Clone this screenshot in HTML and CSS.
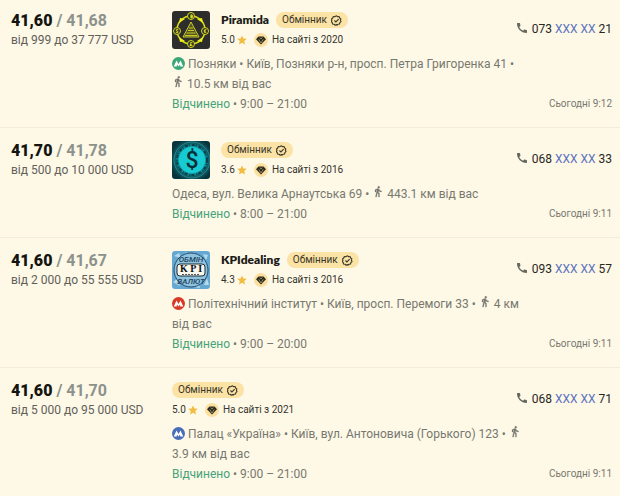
FILE: index.html
```
<!DOCTYPE html>
<html lang="uk">
  <head>
    <meta charset="UTF-8" />
    <meta name="viewport" content="width=device-width, initial-scale=1.0" />
    <title>Обмінники валют</title>
    <link rel="stylesheet" href="styles.css">
  </head>
  <body>
    <!-- Shared icons -->
    <svg class="sprite" aria-hidden="true">
      <symbol id="verified" viewBox="0 0 24 24">
        <path d="M12 1.8l2.6 1.9 3.2-.2 1 3.1 2.7 1.8-1 3.1 1.4 3-2.6 2-.7 3.2-3.2.4-2.4 2.2L12 21l-3 1.3-2.4-2.2-3.2-.4-.7-3.2-2-2.5 1.4-2.5-1-3.1 2.7-1.8 1-3.1 3.2.2z" fill="none" stroke="currentColor" stroke-width="2.4" stroke-linejoin="round" />
        <path d="M7.5 12l3.2 3.2 6-6.2" fill="none" stroke="currentColor" stroke-width="2.4" />
      </symbol>
      <symbol id="star" viewBox="0 0 24 24">
        <path d="M12 1l3.4 7.3 7.9.9-5.900 5.400 1.600 7.900L12 18.500 5 22.500l1.600-7.900L.7 9.200l7.900-.9z" fill="#f1bd41" />
      </symbol>
      <symbol id="diamond" viewBox="0 0 28 28">
        <circle cx="14" cy="14" r="14" fill="#fbdf9e" />
        <path d="M9 7h10l5 5.500L14 23 4 12.500z" fill="#2b2a1e" />
        <path d="M9.500 12.500L14 20l4.500-7.500M11.500 9l2.500 3 2.500-3" fill="none" stroke="#fbdf9e" stroke-width="1" />
      </symbol>
      <symbol id="metro" viewBox="0 0 26 26">
        <circle cx="13" cy="13" r="13" fill="currentColor" />
        <path d="M3.500 19L9 7l4 7 4-7 5.500 12h-6l-.5-4-3 4-3-4-.5 4z" fill="#fff" />
      </symbol>
      <symbol id="walk" viewBox="0 0 24 24">
        <path d="M13.500 5.500c1.100 0 2-.9 2-2s-.9-2-2-2-2 .9-2 2 .9 2 2 2zM9.800 8.900L7 23h2.100l1.800-8 2.100 2v6h2v-7.500l-2.100-2 .6-3C14.800 12 16.800 13 19 13v-2c-1.900 0-3.500-1-4.300-2.400l-1-1.600c-.4-.6-1-1-1.700-1-.3 0-.5.1-.8.1L6 8.300V13h2V9.600l1.800-.7" fill="currentColor" stroke="currentColor" stroke-width="0.6" />
      </symbol>
      <symbol id="phone" viewBox="3 3 18 18">
        <path d="M20 15.400c-1.200 0-2.400-.2-3.500-.6-.4-.1-.7 0-1 .3l-1.600 1.900c-2.800-1.300-5.500-3.900-6.900-6.800l2-1.700c.2-.2.300-.6.200-1-.4-1.100-.6-2.300-.6-3.500 0-.5-.4-1-1-1H4.200C3.600 3 3 3.200 3 4c0 9.300 7.700 17 17 17 .7 0 1-.6 1-1.200v-3.400c0-.6-.4-1-1-1z" fill="currentColor" />
      </symbol>
    </svg>

    <main class="offers">
      <article class="offer">
        <div class="rate">
          <p class="price"><strong>41,60</strong> / 41,68</p>
          <p class="limits">від 999 до 37 777 USD</p>
        </div>
        <div class="details">
          <header class="seller">
            <svg class="logo" viewBox="0 0 38 38" role="img" aria-label="Piramida">
              <rect width="38" height="38" fill="#2d2d2b" />
              <circle cx="19" cy="19" r="14" fill="none" stroke="#d8dc1c" stroke-width="1.500" />
              <path d="M19 11l8 15H11z" fill="#55561f" stroke="#c9ca2a" />
              <path d="M17 17h4M16 19.500h6M14.500 22h9M13 24.500h12" stroke="#c9ca2a" />
              <path d="M7 12l1-5 5 1zM31 12l-1-5-5 1zM7 26l1 5 5-1zM31 26l-1 5-5-1z" fill="#eef01a" />
              <g fill="#2d2d2b" stroke="#d8dc1c">
                <circle cx="19" cy="5" r="3.500" />
                <circle cx="5" cy="20" r="3.500" />
                <circle cx="33" cy="20" r="3.500" />
                <circle cx="19" cy="33" r="3.500" />
              </g>
              <g class="coin-sign">
                <text x="19" y="7">฿</text>
                <text x="5" y="22">$</text>
                <text x="33" y="22">€</text>
                <text x="19" y="35">£</text>
              </g>
            </svg>
            <div class="seller-info">
              <div class="title">
                <h2 class="name">Piramida</h2>
                <span class="tag">Обмінник <svg><use href="#verified" /></svg></span>
              </div>
              <p class="rating">5.0 <svg class="star"><use href="#star" /></svg><svg class="diamond"><use href="#diamond" /></svg>На сайті з 2020</p>
            </div>
          </header>
          <p class="address"><svg class="metro green"><use href="#metro" /></svg> Позняки • Київ, Позняки р-н, просп. Петра Григоренка 41 • <svg class="walk"><use href="#walk" /></svg> 10.5 км від вас</p>
          <p class="hours"><span class="open">Відчинено</span> • 9:00 – 21:00</p>
        </div>
        <div class="contact">
          <p class="phone"><svg><use href="#phone" /></svg>073 <button type="button">XXX XX</button> 21</p>
          <time class="date">Сьогодні 9:12</time>
        </div>
      </article>

      <article class="offer">
        <div class="rate">
          <p class="price"><strong>41,70</strong> / 41,78</p>
          <p class="limits">від 500 до 10 000 USD</p>
        </div>
        <div class="details">
          <header class="seller">
            <svg class="logo" viewBox="0 0 38 38" role="img" aria-label="Долар">
              <defs>
                <radialGradient id="glow">
                  <stop offset="0" stop-color="#18cfd6" />
                  <stop offset="0.55" stop-color="#14b9c2" />
                  <stop offset="0.75" stop-color="#0c626d" />
                  <stop offset="1" stop-color="#08343d" />
                </radialGradient>
              </defs>
              <rect width="38" height="38" fill="#08343d" />
              <circle cx="20" cy="19" r="22" fill="url(#glow)" />
              <circle cx="20" cy="19" r="15" fill="none" stroke="#0b3f49" stroke-width="2" stroke-dasharray="3 1 1 2" />
              <circle cx="20" cy="19" r="18" fill="none" stroke="#2f8087" />
              <circle cx="20" cy="19" r="13" fill="#17cbd3" />
              <text class="dollar" x="20" y="27">$</text>
            </svg>
            <div class="seller-info">
              <div class="title">
                <span class="tag">Обмінник <svg><use href="#verified" /></svg></span>
              </div>
              <p class="rating">3.6 <svg class="star"><use href="#star" /></svg><svg class="diamond"><use href="#diamond" /></svg>На сайті з 2016</p>
            </div>
          </header>
          <p class="address">Одеса, вул. Велика Арнаутська 69 • <svg class="walk"><use href="#walk" /></svg> 443.1 км від вас</p>
          <p class="hours"><span class="open">Відчинено</span> • 8:00 – 21:00</p>
        </div>
        <div class="contact">
          <p class="phone"><svg><use href="#phone" /></svg>068 <button type="button">XXX XX</button> 33</p>
          <time class="date">Сьогодні 9:11</time>
        </div>
      </article>

      <article class="offer">
        <div class="rate">
          <p class="price"><strong>41,60</strong> / 41,67</p>
          <p class="limits">від 2 000 до 55 555 USD</p>
        </div>
        <div class="details">
          <header class="seller">
            <svg class="logo" viewBox="0 0 38 38" role="img" aria-label="KPIdealing">
              <rect width="38" height="38" fill="#65a9d3" />
              <path d="M2 5l5-3 2 5zM31 3l5 1-2 5zM1 31l4-3 3 7zM32 34l3-7 2 7zM13 1l4 2-3 2zM22 36l5-2 1 3z" fill="#b4daeb" />
              <circle cx="19" cy="19" r="17" fill="#8dc3de" stroke="#274a68" />
              <rect x="5" y="13" width="28" height="12" rx="3" fill="#f7f7ee" stroke="#1c2a35" />
              <g class="kpi-small">
                <text x="19" y="11">ОБМІН</text>
                <text x="19" y="33">ВАЛЮТ</text>
              </g>
              <text class="kpi" x="19" y="21">K P I</text>
              <path d="M10 23.500h18" stroke="#55595c" stroke-dasharray="2 1" />
            </svg>
            <div class="seller-info">
              <div class="title">
                <h2 class="name">KPIdealing</h2>
                <span class="tag">Обмінник <svg><use href="#verified" /></svg></span>
              </div>
              <p class="rating">4.3 <svg class="star"><use href="#star" /></svg><svg class="diamond"><use href="#diamond" /></svg>На сайті з 2016</p>
            </div>
          </header>
          <p class="address"><svg class="metro red"><use href="#metro" /></svg> Політехнічний інститут • Київ, просп. Перемоги 33 • <svg class="walk"><use href="#walk" /></svg> 4 км від вас</p>
          <p class="hours"><span class="open">Відчинено</span> • 9:00 – 20:00</p>
        </div>
        <div class="contact">
          <p class="phone"><svg><use href="#phone" /></svg>093 <button type="button">XXX XX</button> 57</p>
          <time class="date">Сьогодні 9:11</time>
        </div>
      </article>

      <article class="offer">
        <div class="rate">
          <p class="price"><strong>41,60</strong> / 41,70</p>
          <p class="limits">від 5 000 до 95 000 USD</p>
        </div>
        <div class="details">
          <header class="seller">
            <div class="seller-info">
              <div class="title">
                <span class="tag">Обмінник <svg><use href="#verified" /></svg></span>
              </div>
              <p class="rating">5.0 <svg class="star"><use href="#star" /></svg><svg class="diamond"><use href="#diamond" /></svg>На сайті з 2021</p>
            </div>
          </header>
          <p class="address"><svg class="metro blue"><use href="#metro" /></svg> Палац «Україна» • Київ, вул. Антоновича (Горького) 123 • <svg class="walk"><use href="#walk" /></svg> 3.9 км від вас</p>
          <p class="hours"><span class="open">Відчинено</span> • 9:00 – 21:00</p>
        </div>
        <div class="contact">
          <p class="phone"><svg><use href="#phone" /></svg>068 <button type="button">XXX XX</button> 71</p>
          <time class="date">Сьогодні 9:11</time>
        </div>
      </article>
    </main>
  </body>
</html>
```
FILE: styles.css
```
body {
  margin: 0;
  font-family: Roboto, Arial, sans-serif;
  font-size: 12px;
  line-height: 20px;
  color: #77786f;
  background-color: #fef8e7;
}

h2,
p {
  margin: 0;
}

.sprite {
  display: none;
}

.offer {
  display: grid;
  grid-template-columns: 153px 1fr 82px;
  column-gap: 8px;
  padding: 13px 8px 13px 11px;
  border-bottom: 1px solid #f3ebdc;
}

.offer:first-child {
  padding-top: 11px;
}

.offer:last-child {
  border-bottom: 0;
}

.price {
  font-size: 16px;
  font-weight: 700;
  color: #8b928c;
}

.price strong {
  color: #14150f;
}

.limits {
  line-height: 18px;
  color: #5f6159;
}

.seller {
  display: flex;
  gap: 11px;
  height: 38px;
  margin-bottom: 5px;
}

.logo {
  width: 38px;
  height: 38px;
  border-radius: 3px;
}

.coin-sign {
  font-size: 5px;
  font-weight: 700;
  text-anchor: middle;
  fill: #eef01a;
}

.dollar {
  font-size: 23px;
  font-weight: 500;
  text-anchor: middle;
  fill: #072f38;
}

.kpi {
  font-family: "Liberation Serif", serif;
  font-size: 10px;
  font-weight: 700;
  text-anchor: middle;
  fill: #111;
}

.kpi-small {
  font-size: 8px;
  font-style: italic;
  font-weight: 500;
  text-anchor: middle;
  fill: #24445f;
}

.title {
  display: flex;
  align-items: center;
  gap: 7px;
  height: 18px;
}

.name {
  font-family: Lato, sans-serif;
  font-size: 12px;
  font-weight: 800;
  line-height: 18px;
  color: #1c1d17;
}

.tag {
  display: flex;
  align-items: center;
  gap: 4px;
  padding: 0 6px;
  border-radius: 8px;
  font-size: 10px;
  line-height: 16px;
  color: #38362a;
  background-color: #fbe2a5;
}

.tag svg {
  width: 11px;
  height: 11px;
}

.rating {
  display: flex;
  align-items: center;
  height: 22px;
  font-size: 10px;
  color: #33342d;
}

.star {
  width: 10px;
  height: 10px;
  margin: 0 7px 0 2px;
}

.diamond {
  width: 14px;
  height: 14px;
  margin-right: 4px;
}

.metro {
  width: 13px;
  height: 13px;
  vertical-align: -2px;
}

.green {
  color: #3ba776;
}

.red {
  color: #d93a26;
}

.blue {
  color: #4a6db8;
}

.walk {
  width: 12px;
  height: 13px;
}

.open {
  color: #45a279;
}

.contact {
  display: flex;
  flex-direction: column;
  justify-content: space-between;
  align-items: flex-end;
  padding-top: 8px;
}

.phone {
  color: #26271f;
  white-space: nowrap;
}

.phone svg {
  width: 10px;
  height: 10px;
  margin-right: 5px;
  color: #66685f;
}

.phone button {
  padding: 0;
  border: 0;
  font: inherit;
  color: #5b72c0;
  background: none;
  cursor: pointer;
}

.date {
  font-size: 10px;
}
```
